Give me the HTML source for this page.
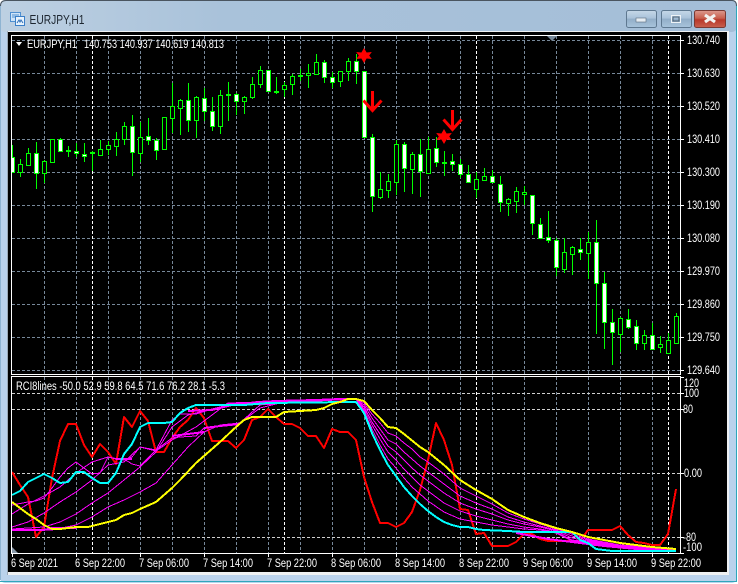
<!DOCTYPE html>
<html><head><meta charset="utf-8"><title>EURJPY,H1</title>
<style>
html,body{margin:0;padding:0;background:#fff;width:738px;height:584px;overflow:hidden}
svg{display:block}
text{font-family:"Liberation Sans",sans-serif;font-size:11.5px}
.w{fill:#fff}
</style></head><body>
<svg width="738" height="584" viewBox="0 0 738 584" xmlns="http://www.w3.org/2000/svg">
<defs>
<linearGradient id="t" x1="0" y1="0" x2="0" y2="1"><stop offset="0" stop-color="#9db7d1"/><stop offset=".06" stop-color="#a6bfd8"/><stop offset="1" stop-color="#bad2ea"/></linearGradient>
<linearGradient id="tb" x1="0" y1="0" x2="1" y2="0"><stop offset="0" stop-color="#bdd0e2"/><stop offset=".3" stop-color="#a9c2da"/><stop offset="1" stop-color="#a4bed8"/></linearGradient>
<linearGradient id="b" x1="0" y1="0" x2="0" y2="1"><stop offset="0" stop-color="#c6d8e8"/><stop offset=".45" stop-color="#a9c2da"/><stop offset=".5" stop-color="#92aec8"/><stop offset="1" stop-color="#a8c4dc"/></linearGradient>
<linearGradient id="c" x1="0" y1="0" x2="0" y2="1"><stop offset="0" stop-color="#dc9a8e"/><stop offset=".45" stop-color="#c8604f"/><stop offset=".55" stop-color="#b8382a"/><stop offset="1" stop-color="#c9604e"/></linearGradient>
<clipPath id="mc"><rect x="12" y="36" width="668" height="338"/></clipPath>
<clipPath id="ic"><rect x="12" y="377" width="668" height="176"/></clipPath>
</defs>
<rect width="738" height="584" fill="#fff"/>
<rect x="0" y="0" width="737" height="583" rx="5" fill="#bad2ec"/>
<rect x="0" y="0" width="737" height="32" rx="5" fill="url(#tb)"/>
<path d="M0.5 6Q0.5 .5 6 .5H732Q736.5 .5 736.5 6" fill="none" stroke="#4a5560"/>
<path d="M736.5 6V581.5H0" fill="none" stroke="#2fa6bb"/>
<rect x="0" y="6" width="1" height="574" fill="#8fb4d2"/>
<rect x="7" y="31" width="722" height="544" fill="#eef0f2"/>
<rect x="7" y="31" width="1" height="544" fill="#9aa8b6"/>
<rect x="8" y="32" width="719" height="540" fill="#000"/>

<!-- title icon -->
<rect x="10.5" y="12.5" width="10" height="9" fill="#cfe4f8" stroke="#4f8fd0"/>
<rect x="15.5" y="16.5" width="9" height="9" fill="#e8f3fd" stroke="#3b7fc8"/>
<path d="M12 15h7M12 17h3" stroke="#4f8fd0"/>
<path d="M17 23l2-3 1 2 1-2 2 3" fill="none" stroke="#2f6fb8"/>
<text x="29.5" y="24" fill="#1d2630" style="font-size:12.5px" textLength="55" lengthAdjust="spacingAndGlyphs">EURJPY,H1</text>

<!-- caption buttons -->
<rect x="626.5" y="10.5" width="30" height="17" rx="2" fill="url(#b)" stroke="#5e7890"/>
<rect x="636" y="18" width="10" height="4" fill="#e6edf3" stroke="#5a6c7c" stroke-width=".6"/>
<rect x="661.5" y="10.5" width="30" height="17" rx="2" fill="url(#b)" stroke="#5e7890"/>
<rect x="671.5" y="15.5" width="9" height="7" fill="none" stroke="#eef3f7"/><rect x="673" y="17" width="6" height="4" fill="none" stroke="#4e6070"/>
<rect x="694.5" y="10.5" width="31" height="17" rx="2" fill="url(#c)" stroke="#7a3a34"/>
<path d="M705 15l10 7M715 15l-10 7" stroke="#f2f2f0" stroke-width="3.2"/>

<!-- grid main -->
<g fill="none" stroke="#778899" stroke-dasharray="3 2" shape-rendering="crispEdges">
<path d="M12 40.5H680M12 73.5H680M12 106.5H680M12 139.5H680M12 172.5H680M12 205.5H680M12 238.5H680M12 271.5H680M12 304.5H680M12 337.5H680M12 370.5H680"/>
<path d="M44.5 36V374M76.5 36V374M108.5 36V374M140.5 36V374M172.5 36V374M204.5 36V374M236.5 36V374M268.5 36V374M300.5 36V374M332.5 36V374M364.5 36V374M396.5 36V374M428.5 36V374M460.5 36V374M492.5 36V374M524.5 36V374M556.5 36V374M588.5 36V374M620.5 36V374M652.5 36V374"/>
<path d="M44.5 377V553M76.5 377V553M108.5 377V553M140.5 377V553M172.5 377V553M204.5 377V553M236.5 377V553M268.5 377V553M300.5 377V553M332.5 377V553M364.5 377V553M396.5 377V553M428.5 377V553M460.5 377V553M492.5 377V553M524.5 377V553M556.5 377V553M588.5 377V553M620.5 377V553M652.5 377V553"/>
</g>
<g fill="none" stroke="#fff" stroke-dasharray="3 2" shape-rendering="crispEdges">
<path d="M92.5 36V374M284.5 36V374M476.5 36V374M668.5 36V374M92.5 377V553M284.5 377V553M476.5 377V553M668.5 377V553"/>
</g>
<g fill="none" stroke="#d0d0d0" stroke-dasharray="3 2" shape-rendering="crispEdges">
<path d="M12 393.5H680M12 409.5H680M12 473.5H680M12 537.5H680"/>
</g>

<!-- candles -->
<g clip-path="url(#mc)" shape-rendering="crispEdges">
<path fill="none" stroke="#00ff00" d="M12.5 145V173M20.5 159V177M28.5 148V166M36.5 142V189M44.5 160V183M52.5 139V162M60.5 138V152M68.5 146V157M76.5 143V157M84.5 143V162M92.5 151V171M100.5 140V156M108.5 141V155M116.5 132V156M124.5 122V145M132.5 115V176M140.5 122V162M148.5 118V145M156.5 138V160M164.5 117V149M172.5 83V133M180.5 99V135M188.5 83V132M196.5 96V138M204.5 88V121M212.5 97V131M220.5 90V134M228.5 82V121M236.5 93V115M244.5 96V114M252.5 77V99M260.5 66V88M268.5 70V91M276.5 77V94M284.5 82V97M292.5 74V95M300.5 69V81M308.5 64V88M316.5 54V75M324.5 60V83M332.5 72V88M340.5 71V87M348.5 58V81M356.5 54V84M364.5 71V137M372.5 134V212M380.5 172V199M388.5 174V198M396.5 140V195M404.5 142V192M412.5 152V194M420.5 139V197M428.5 137V173M436.5 137V167M444.5 151V176M452.5 154V171M460.5 159V178M468.5 165V183M476.5 172V198M484.5 168V181M492.5 170V183M500.5 176V212M508.5 198V216M516.5 187V213M524.5 186V205M532.5 195V235M540.5 218V239M548.5 211V243M556.5 238V276M564.5 238V273M572.5 246V275M580.5 238V260M588.5 232V279M596.5 220V334M604.5 272V349M612.5 309V365M620.5 317V352M628.5 309V329M636.5 320V350M644.5 330V350M652.5 323V349M660.5 336V353M668.5 333V353M676.5 313V343"/>
<path fill="#000" stroke="#00ff00" d="M18.5 164.5h4v8h-4zM26.5 153.5h4v12h-4zM42.5 161.5h4v12h-4zM50.5 139.5h4v23h-4zM66.5 150.5h4v1h-4zM90.5 152.5h4v1h-4zM98.5 149.5h4v6h-4zM106.5 145.5h4v4h-4zM114.5 139.5h4v7h-4zM122.5 126.5h4v13h-4zM138.5 137.5h4v16h-4zM162.5 117.5h4v32h-4zM170.5 106.5h4v12h-4zM178.5 100.5h4v8h-4zM194.5 97.5h4v23h-4zM218.5 95.5h4v31h-4zM226.5 94.5h4v1h-4zM242.5 97.5h4v4h-4zM250.5 84.5h4v13h-4zM258.5 70.5h4v14h-4zM282.5 85.5h4v4h-4zM290.5 76.5h4v8h-4zM298.5 75.5h4v1h-4zM306.5 73.5h4v2h-4zM314.5 62.5h4v12h-4zM338.5 71.5h4v10h-4zM346.5 61.5h4v10h-4zM378.5 189.5h4v8h-4zM386.5 181.5h4v9h-4zM394.5 144.5h4v38h-4zM410.5 154.5h4v15h-4zM426.5 149.5h4v24h-4zM442.5 162.5h4v1h-4zM474.5 179.5h4v10h-4zM482.5 176.5h4v4h-4zM506.5 199.5h4v4h-4zM514.5 191.5h4v10h-4zM522.5 192.5h4v2h-4zM562.5 252.5h4v17h-4zM570.5 247.5h4v7h-4zM586.5 242.5h4v11h-4zM618.5 318.5h4v16h-4zM642.5 335.5h4v8h-4zM658.5 344.5h4v3h-4zM666.5 340.5h4v13h-4zM674.5 316.5h4v27h-4z"/>
<path fill="#fff" stroke="#00ff00" d="M10.5 157.5h4v15h-4zM34.5 153.5h4v20h-4zM58.5 139.5h4v12h-4zM74.5 151.5h4v2h-4zM82.5 154.5h4v2h-4zM130.5 126.5h4v26h-4zM146.5 136.5h4v4h-4zM154.5 140.5h4v10h-4zM186.5 100.5h4v20h-4zM202.5 98.5h4v13h-4zM210.5 111.5h4v15h-4zM234.5 94.5h4v7h-4zM266.5 70.5h4v21h-4zM274.5 91.5h4v1h-4zM322.5 62.5h4v15h-4zM330.5 77.5h4v5h-4zM354.5 61.5h4v10h-4zM362.5 71.5h4v66h-4zM370.5 137.5h4v59h-4zM402.5 144.5h4v24h-4zM418.5 154.5h4v17h-4zM434.5 148.5h4v14h-4zM450.5 161.5h4v3h-4zM458.5 164.5h4v10h-4zM466.5 174.5h4v8h-4zM490.5 176.5h4v6h-4zM498.5 184.5h4v18h-4zM530.5 195.5h4v28h-4zM538.5 224.5h4v14h-4zM546.5 237.5h4v3h-4zM554.5 240.5h4v27h-4zM578.5 249.5h4v3h-4zM594.5 242.5h4v41h-4zM602.5 283.5h4v39h-4zM610.5 322.5h4v10h-4zM626.5 319.5h4v8h-4zM634.5 326.5h4v17h-4zM650.5 335.5h4v14h-4z"/>
</g>

<!-- red markers -->
<g fill="#f00" stroke="none">
<path d="M364 48l2.6 4.5 5.2-.5-2.6 3.5 2.6 3.5-5.2-.5-2.6 4.5-2.6-4.5-5.2.5 2.6-3.5-2.6-3.5 5.2.5z"/>
<path d="M444 129l2.6 4.5 5.2-.5-2.6 3.5 2.6 3.5-5.2-.5-2.6 4.5-2.6-4.5-5.2.5 2.6-3.5-2.6-3.5 5.2.5z"/>
</g>
<path d="M372.5 91V110M363.5 100.5L372.5 110.5 381.5 100.5" fill="none" stroke="#f00" stroke-width="3"/>
<path d="M452.5 110V130M443.5 119.5L452.5 129.5 461.5 119.5" fill="none" stroke="#f00" stroke-width="3"/>

<!-- indicator -->
<g clip-path="url(#ic)" fill="none" shape-rendering="crispEdges" stroke-linejoin="round">
<path stroke="#f00" stroke-width="2" d="M12 472L20 485 28 497 36 537 44 527 52 478 60 441 68 424 76 424 84 445 92 457 100 444 108 452 116 464 124 417 132 427 140 411 148 421 156 452 164 452 172 438 180 427 188 420 196 408 204 418 212 441 220 441 228 441 236 448 244 440 252 420 260 417 268 409 276 417 284 424 292 424 300 428 308 436 316 436 324 448 332 429 340 432 348 432 356 440 364 477 372 502 380 523 388 523 396 527 404 523 412 512 420 490 428 460 436 423 444 440 452 465 460 509 468 510 476 534 484 533 492 546 500 546 508 546 516 542 524 534 532 534 540 539 548 541 556 541 564 541 572 541 580 541 588 530 596 530 604 530 612 530 620 526 628 535 636 542 644 543 652 545 660 545 668 534 676 489"/>
<g stroke="#f0f">
<path d="M12 505L28 502 36 501 44 498 52 488 60 477 68 468 76 462 84 468 92 474 100 473 108 457 116 459 124 459 132 464 140 466 148 458 156 450 172 420 180 414 196 414 212 409 220 408 228 403 250 403 276 401 316 400 356 399 364 403 372 414 380 423 388 433 396 436 404 443 412 449 420 457 428 462 444 474 460 488 476 496 492 504 508 513 524 519 540 524 556 529 572 534 588 539 604 542 620 545 636 546 652 548 676 549"/>
<path d="M12 514L28 504 44 496 60 487 76 473 92 462 108 457 124 460 132 457 140 447 156 450 172 438 180 437 196 436 204 428 220 426 236 425 244 420 260 408 280 403 356 399 364 405 372 418 380 429 388 440 396 444 404 452 412 459 420 466 428 472 444 484 460 496 476 503 492 509 508 517 524 522 540 526 556 530 572 536 588 540 604 543 620 546 636 547 652 548 676 549"/>
<path d="M12 527L28 522 44 513 60 502 76 492 92 480 108 465 124 462 140 447 156 451 172 440 196 427 212 415 228 403 260 402 356 399 364 407 372 422 380 434 388 446 396 452 404 460 412 468 420 475 428 481 444 493 460 503 476 509 492 514 508 520 524 524 540 527 556 531 572 538 588 541 604 544 620 547 636 548 652 549 676 550"/>
<path d="M12 529L44 527 60 522 76 514 92 503 108 493 124 480 140 467 156 452 172 427 188 415 204 411 228 405 260 402 356 399 364 409 372 425 380 439 388 452 396 460 404 469 412 477 420 485 428 491 444 503 460 511 476 516 492 520 508 524 524 527 540 529 556 532 572 540 588 542 604 545 620 547 636 548 652 549 676 550"/>
<path d="M12 530L52 530 76 525 92 517 108 507 124 500 140 492 156 483 172 465 188 447 204 432 220 425 240 423 260 405 280 402 356 399 364 411 372 429 380 445 388 459 396 468 404 478 412 487 420 494 428 501 444 512 460 519 476 522 492 525 508 527 524 529 540 530 556 533 572 541 588 543 604 546 620 548 636 549 652 550 676 551"/>
</g>
<g stroke="#f0f" stroke-width="2">
<path d="M12 530H44L52 528H76"/>
<path d="M116 459H132"/>
<path d="M172 436L188 434 204 432M204 428L220 426 240 424"/>
<path d="M188 411L212 410 232 405 258 402 276 401 316 400 340 399 356 399"/>
<path d="M228 404H268L290 402"/>
<path d="M516 533L532 536 548 539 572 542 604 546 636 549 660 550 676 549"/>
</g>
<path stroke="#0ff" stroke-width="2" d="M12 495L20 491 28 482 36 478 44 474 52 478 60 483 68 482 76 472 84 472 92 478 100 483 108 483 116 473 124 454 132 444 140 427 148 423 156 423 164 423 172 422 180 413 188 408 196 405 244 405 268 403 348 402 356 402 364 413 372 433 380 450 388 465 396 476 404 487 412 496 420 504 428 511 436 517 444 522 452 525 460 527 468 527 476 529 484 530 508 531 524 532 572 532 580 540 588 543 596 549 604 550 612 551 676 551"/>
<path stroke="#ff0" stroke-width="2" d="M12 502L20 508 28 514 36 519 44 525 52 529 60 529 76 527 88 527 100 524 116 520 124 515 132 513 140 509 156 502 164 495 172 488 180 480 196 463 204 456 220 442 236 427 244 420 252 417 276 417 284 412 316 410 324 408 332 404 340 402 348 399 356 399 364 401 372 410 380 418 388 427 396 428 404 434 420 447 428 452 444 465 460 480 476 490 492 499 508 510 524 517 540 523 556 528 572 532 588 537 604 540 620 543 636 545 652 547 676 549"/>
</g>

<!-- triangles -->
<path d="M547 36H557L552 41Z" fill="#778899"/>
<path d="M16 42H22L19 46Z" fill="#fff"/>
<path d="M12 547L18 553H12Z" fill="#8a9aaa"/>

<!-- frame -->
<g fill="none" stroke="#fff" shape-rendering="crispEdges">
<path d="M11.5 35.5H680.5V374.5H11.5ZM11.5 376.5H680.5V553.5H11.5Z"/>
<path d="M680 40.5H684M680 73.5H684M680 106.5H684M680 139.5H684M680 172.5H684M680 205.5H684M680 238.5H684M680 271.5H684M680 304.5H684M680 337.5H684M680 370.5H684M680 377.5H684M680 393.5H684M680 409.5H684M680 473.5H684M680 537.5H684M680 553.5H684"/>
<path d="M12.5 553V557M76.5 553V557M140.5 553V557M204.5 553V557M268.5 553V557M332.5 553V557M396.5 553V557M460.5 553V557M524.5 553V557M588.5 553V557M652.5 553V557"/>
</g>

<!-- labels -->
<text class="w" x="27" y="48" textLength="50" lengthAdjust="spacingAndGlyphs">EURJPY,H1</text>
<text class="w" x="84" y="48" textLength="140" lengthAdjust="spacingAndGlyphs">140.753 140.937 140.619 140.813</text>
<text class="w" x="16" y="390" textLength="209" lengthAdjust="spacingAndGlyphs">RCI8lines -50.0 52.9 59.8 64.5 71.6 76.2 28.1 -5.3</text>
<g class="w">
<text class="w" x="687" y="44" textLength="33" lengthAdjust="spacingAndGlyphs">130.740</text>
<text class="w" x="687" y="77" textLength="33" lengthAdjust="spacingAndGlyphs">130.630</text>
<text class="w" x="687" y="110" textLength="33" lengthAdjust="spacingAndGlyphs">130.520</text>
<text class="w" x="687" y="143" textLength="33" lengthAdjust="spacingAndGlyphs">130.410</text>
<text class="w" x="687" y="176" textLength="33" lengthAdjust="spacingAndGlyphs">130.300</text>
<text class="w" x="687" y="209" textLength="33" lengthAdjust="spacingAndGlyphs">130.190</text>
<text class="w" x="687" y="242" textLength="33" lengthAdjust="spacingAndGlyphs">130.080</text>
<text class="w" x="687" y="275" textLength="33" lengthAdjust="spacingAndGlyphs">129.970</text>
<text class="w" x="687" y="308" textLength="33" lengthAdjust="spacingAndGlyphs">129.860</text>
<text class="w" x="687" y="341" textLength="33" lengthAdjust="spacingAndGlyphs">129.750</text>
<text class="w" x="687" y="374" textLength="33" lengthAdjust="spacingAndGlyphs">129.640</text>
<text class="w" x="684" y="387" textLength="15" lengthAdjust="spacingAndGlyphs">120</text>
<text class="w" x="684" y="397" textLength="15" lengthAdjust="spacingAndGlyphs">100</text>
<text class="w" x="683" y="413" textLength="10" lengthAdjust="spacingAndGlyphs">80</text>
<text class="w" x="684" y="477" textLength="18" lengthAdjust="spacingAndGlyphs">0.00</text>
<text class="w" x="683" y="541" textLength="13" lengthAdjust="spacingAndGlyphs">-80</text>
<text class="w" x="683" y="551" textLength="19" lengthAdjust="spacingAndGlyphs">-100</text>
<text class="w" x="11" y="567" textLength="47" lengthAdjust="spacingAndGlyphs">6 Sep 2021</text>
<text class="w" x="75" y="567" textLength="50" lengthAdjust="spacingAndGlyphs">6 Sep 22:00</text>
<text class="w" x="139" y="567" textLength="50" lengthAdjust="spacingAndGlyphs">7 Sep 06:00</text>
<text class="w" x="203" y="567" textLength="50" lengthAdjust="spacingAndGlyphs">7 Sep 14:00</text>
<text class="w" x="267" y="567" textLength="50" lengthAdjust="spacingAndGlyphs">7 Sep 22:00</text>
<text class="w" x="331" y="567" textLength="50" lengthAdjust="spacingAndGlyphs">8 Sep 06:00</text>
<text class="w" x="395" y="567" textLength="50" lengthAdjust="spacingAndGlyphs">8 Sep 14:00</text>
<text class="w" x="459" y="567" textLength="50" lengthAdjust="spacingAndGlyphs">8 Sep 22:00</text>
<text class="w" x="523" y="567" textLength="50" lengthAdjust="spacingAndGlyphs">9 Sep 06:00</text>
<text class="w" x="587" y="567" textLength="50" lengthAdjust="spacingAndGlyphs">9 Sep 14:00</text>
<text class="w" x="651" y="567" textLength="50" lengthAdjust="spacingAndGlyphs">9 Sep 22:00</text>
</g>
</svg>
</body></html>
